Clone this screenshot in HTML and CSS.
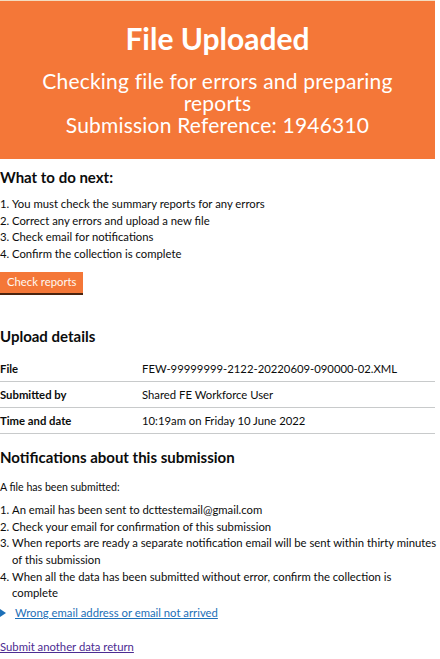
FILE: index.html
```html
<!DOCTYPE html>
<html lang="en">
<head>
<meta charset="utf-8">
<title>File Uploaded</title>
<link rel="stylesheet" href="styles.css">
</head>
<body>
<main class="page">
  <div class="panel">
    <h1 class="panel-title">File Uploaded</h1>
    <div class="panel-body">Checking file for errors and preparing reports<br>Submission Reference: 1946310</div>
  </div>

  <h2 class="h-m first">What to do next:</h2>
  <ol class="list steps">
    <li>You must check the summary reports for any errors</li>
    <li>Correct any errors and upload a new file</li>
    <li>Check email for notifications</li>
    <li>Confirm the collection is complete</li>
  </ol>
  <a class="button" href="#">Check reports</a>

  <h2 class="h-s">Upload details</h2>
  <dl class="summary">
    <div class="row"><dt>File</dt><dd>FEW-99999999-2122-20220609-090000-02.XML</dd></div>
    <div class="row"><dt>Submitted by</dt><dd>Shared FE Workforce User</dd></div>
    <div class="row"><dt>Time and date</dt><dd>10:19am on Friday 10 June 2022</dd></div>
  </dl>

  <h2 class="h-m notif">Notifications about this submission</h2>
  <p class="small">A file has been submitted:</p>
  <ol class="list notes">
    <li>An email has been sent to dcttestemail@gmail.com</li>
    <li>Check your email for confirmation of this submission</li>
    <li>When reports are ready a separate notification email will be sent within thirty minutes of this submission</li>
    <li>When all the data has been submitted without error, confirm the collection is complete</li>
  </ol>
  <div class="details"><span class="arrow"></span><a href="#" class="details-link">Wrong email address or email not arrived</a></div>
  <a href="#" class="visited">Submit another data return</a>
</main>
</body>
</html>
```

FILE: styles.css
```css
* { box-sizing: border-box; }
html, body { margin: 0; padding: 0; background: #fff; }
body {
  font-family: Lato, "Liberation Sans", sans-serif;
  color: #0b0c0c;
  font-size: 11.3px;
}
.page { width: 440px; }
.panel {
  width: 435px;
  background: #f47738;
  color: #fff;
  text-align: center;
  padding: 21px 20px 23px;
  border-top: 1px solid #f3dcc0;
}
.panel-title {
  margin: 0 0 16px;
  font-size: 30px;
  line-height: 32px;
  font-weight: 700;
}
.panel-body {
  font-size: 21px;
  letter-spacing: 0.2px;
  line-height: 22px;
}
.h-m {
  font-size: 15px;
  font-weight: 700;
  line-height: 20px;
  margin: 0;
}
.first { margin-top: 8px; }
.h-s {
  font-size: 15px;
  font-weight: 700;
  line-height: 20px;
  margin: 33px 0 10px;
}
.list {
  margin: 0;
  padding: 0 0 0 12px;
  line-height: 16.7px;
}
.steps { margin-top: 9px; }
.notes { margin-top: 7px; }
.button {
  display: inline-block;
  margin-top: 9px;
  background: #f47738;
  color: #fff8f0;
  text-decoration: none;
  padding: 2px 7px 3px;
  line-height: 16px;
  box-shadow: 0 2px 0 #4a2410;
}
.summary { margin: 0; width: 435px; }
.row {
  display: flex;
  border-bottom: 1px solid #c8cacb;
  padding: 6px 0 6px;
  line-height: 13px;
}
.row dt { width: 142px; font-weight: 700; margin: 0; }
.row dd { margin: 0; }
.notif { margin-top: 13px; }
.small { font-size: 10.6px; margin: 12px 0 0; line-height: 16px; }
.details {
  margin-top: 4px;
  display: flex;
  align-items: center;
  gap: 9px;
}
.arrow {
  width: 0; height: 0;
  border-left: 6px solid #1d70b8;
  border-top: 4px solid transparent;
  border-bottom: 4px solid transparent;
}
.details-link { color: #1d70b8; }
.visited { display: inline-block; margin-top: 21px; color: #4c2c92; }
```
